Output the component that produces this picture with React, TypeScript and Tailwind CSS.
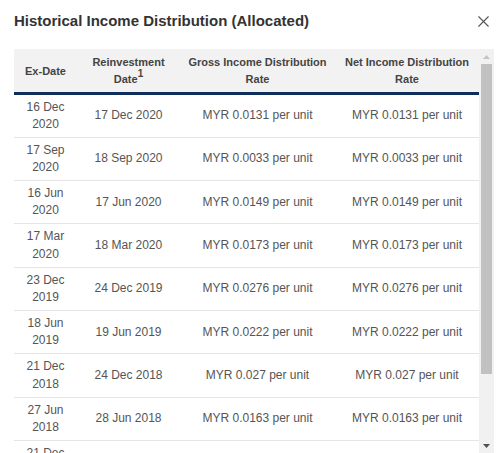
import { X } from "lucide-react";

type Row = { exDate: string; reinvest: string; rate: string };

const rows: Row[] = [
  { exDate: "16 Dec 2020", reinvest: "17 Dec 2020", rate: "0.0131" },
  { exDate: "17 Sep 2020", reinvest: "18 Sep 2020", rate: "0.0033" },
  { exDate: "16 Jun 2020", reinvest: "17 Jun 2020", rate: "0.0149" },
  { exDate: "17 Mar 2020", reinvest: "18 Mar 2020", rate: "0.0173" },
  { exDate: "23 Dec 2019", reinvest: "24 Dec 2019", rate: "0.0276" },
  { exDate: "18 Jun 2019", reinvest: "19 Jun 2019", rate: "0.0222" },
  { exDate: "21 Dec 2018", reinvest: "24 Dec 2018", rate: "0.027" },
  { exDate: "27 Jun 2018", reinvest: "28 Jun 2018", rate: "0.0163" },
  { exDate: "21 Dec 2017", reinvest: "22 Dec 2017", rate: "0.0185" },
];

function splitDate(d: string) {
  const parts = d.split(" ");
  return [parts.slice(0, 2).join(" "), parts[2]];
}

function Scrollbar() {
  return (
    <div className="flex w-[15px] shrink-0 flex-col bg-[#f1f1f1]">
      <div className="flex h-[15px] items-center justify-center">
        <svg width="7" height="4" viewBox="0 0 7 4">
          <path d="M3.5 0 L7 4 L0 4 Z" fill="#c4c4c4" />
        </svg>
      </div>
      <div className="flex-1">
        <div className="mx-[2px] h-[310px] bg-[#c1c1c1]" />
      </div>
      <div className="flex h-[15px] items-center justify-center">
        <svg width="7" height="4" viewBox="0 0 7 4">
          <path d="M0 0 L7 0 L3.5 4 Z" fill="#505050" />
        </svg>
      </div>
    </div>
  );
}

export default function App() {
  return (
    <div className="h-[453px] overflow-hidden bg-white pl-[14px] pr-[6px] font-['Liberation_Sans',Arial,sans-serif]">
      <div className="flex h-[49px] items-start justify-between pt-[11px]">
        <h2 className="text-[15px] font-bold leading-5 text-[#333]">
          Historical Income Distribution (Allocated)
        </h2>
        <button type="button" className="mr-[1px] mt-[1px] text-[#555]">
          <X size={19} strokeWidth={1.4} />
        </button>
      </div>

      <div className="flex h-[404px]">
        <div className="w-[465px] overflow-hidden">
          <table className="w-full table-fixed border-collapse text-center">
            <thead>
              <tr className="bg-[#f2f2f2] text-[11px] font-bold leading-[17px] text-[#444]">
                <th className="h-[44px] w-[63px] border-b-[3px] border-[#0f2d5a] px-2 pt-[2px]">Ex-Date</th>
                <th className="w-[103px] border-b-[3px] border-[#0f2d5a] px-2 pt-[2px]">
                  Reinvestment Date
                  <sup className="relative -top-[2px] align-top text-[10px] leading-none">1</sup>
                </th>
                <th className="w-[155px] border-b-[3px] border-[#0f2d5a] px-1 pt-[2px]">
                  Gross Income Distribution Rate
                </th>
                <th className="w-[144px] border-b-[3px] border-[#0f2d5a] px-2 pt-[2px]">
                  Net Income Distribution Rate
                </th>
              </tr>
            </thead>
            <tbody className="text-[12px] leading-[17.15px] text-[#555]">
              {rows.map((row) => {
                const [dm, y] = splitDate(row.exDate);
                return (
                  <tr key={row.exDate} className="border-b border-[#e5e5e5]">
                    <td className="px-2 py-[4px]">
                      {dm}
                      <br />
                      {y}
                    </td>
                    <td className="px-2 py-[4px]">{row.reinvest}</td>
                    <td className="px-2 py-[4px]">MYR {row.rate} per unit</td>
                    <td className="px-2 py-[4px]">MYR {row.rate} per unit</td>
                  </tr>
                );
              })}
            </tbody>
          </table>
        </div>
        <Scrollbar />
      </div>
    </div>
  );
}
